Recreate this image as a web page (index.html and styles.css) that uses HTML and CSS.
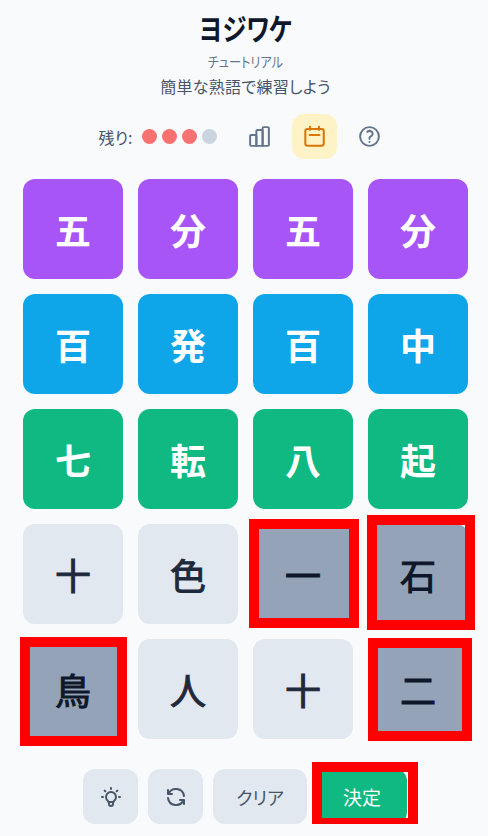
FILE: index.html
```html
<!DOCTYPE html>
<html lang="ja">
<head>
    <meta charset="UTF-8">
    <meta name="viewport" content="width=device-width, initial-scale=1.0">
    <title>ヨジワケ</title>
    <link rel="stylesheet" href="styles.css">
</head>
<body>

    <div class="game">
        <h1 class="title">ヨジワケ</h1>
        <div class="subtitle">チュートリアル</div>
        <div class="description">簡単な熟語で練習しよう</div>

        <div class="status">
            <div class="lives">
                <span class="lives-label">残り:</span>
                <span class="dot"></span>
                <span class="dot"></span>
                <span class="dot"></span>
                <span class="dot used"></span>
            </div>
            <div class="icon-buttons">
                <div class="icon-button">
                    <svg viewBox="0 0 24 24" width="25" height="25" fill="none" stroke="currentColor" stroke-width="1.9" stroke-linejoin="round">
                        <path d="M4 10.6h4a1 1 0 0 1 1 1V21H4a1 1 0 0 1-1-1v-8.4a1 1 0 0 1 1-1z"/>
                        <path d="M10 5.8h4a1 1 0 0 1 1 1V21H9V6.8a1 1 0 0 1 1-1z"/>
                        <path d="M16 3h4a1 1 0 0 1 1 1v16a1 1 0 0 1-1 1h-5V4a1 1 0 0 1 1-1z"/>
                    </svg>
                </div>
                <div class="icon-button active">
                    <svg viewBox="0 0 24 24" width="25" height="25" fill="none" stroke="currentColor" stroke-width="2" stroke-linecap="round" stroke-linejoin="round">
                        <rect x="3.2" y="4.8" width="17.7" height="16" rx="2"/>
                        <path d="M7.7 2.6v3M16.3 2.6v3M7.4 10.5h9.4"/>
                    </svg>
                </div>
                <div class="icon-button">
                    <svg viewBox="0 0 24 24" width="25" height="25" fill="none" stroke="currentColor" stroke-width="1.9" stroke-linecap="round" stroke-linejoin="round">
                        <path d="M3 12a9 9 0 1 0 18 0a9 9 0 0 0-18 0"/>
                        <path d="M9.879 7.519c1.171-1.025 3.071-1.025 4.242 0 1.172 1.025 1.172 2.687 0 3.712-.203.179-.43.326-.67.442-.745.361-1.45.999-1.45 1.827v.75"/>
                        <path d="M12 17.25v.01"/>
                    </svg>
                </div>
            </div>
        </div>

        <div class="board">
            <div class="tile purple">五</div>
            <div class="tile purple">分</div>
            <div class="tile purple">五</div>
            <div class="tile purple">分</div>
            <div class="tile blue">百</div>
            <div class="tile blue">発</div>
            <div class="tile blue">百</div>
            <div class="tile blue">中</div>
            <div class="tile green">七</div>
            <div class="tile green">転</div>
            <div class="tile green">八</div>
            <div class="tile green">起</div>
            <div class="tile">十</div>
            <div class="tile">色</div>
            <div class="tile selected">一<span class="mark mark-ichi"></span></div>
            <div class="tile selected">石<span class="mark mark-ishi"></span></div>
            <div class="tile selected">鳥<span class="mark mark-tori"></span></div>
            <div class="tile">人</div>
            <div class="tile">十</div>
            <div class="tile selected">二<span class="mark mark-ni"></span></div>
        </div>

        <div class="actions">
            <div class="action square">
                <svg viewBox="0 0 24 24" width="24" height="24" fill="none" stroke="currentColor" stroke-width="2" stroke-linecap="round" stroke-linejoin="round">
                    <path d="M3 12h1m8-9v1m8 8h1m-15.4-6.4l.7 .7m12.1-.7l-.7 .7"/>
                    <path d="M9 16a5 5 0 1 1 6 0a3.5 3.5 0 0 0-1 3a2 2 0 0 1-4 0a3.5 3.5 0 0 0-1-3"/>
                    <path d="M9.7 17l4.6 0"/>
                </svg>
            </div>
            <div class="action square">
                <svg viewBox="0 0 24 24" width="24" height="24" fill="none" stroke="currentColor" stroke-width="2" stroke-linecap="round" stroke-linejoin="round">
                    <path d="M20 11a8.1 8.1 0 0 0-15.5-2m-.5-4v4h4"/>
                    <path d="M4 13a8.1 8.1 0 0 0 15.5 2m.5 4v-4h-4"/>
                </svg>
            </div>
            <div class="action clear">クリア</div>
            <div class="action submit">決定<span class="mark mark-submit"></span></div>
        </div>
    </div>

</body>
</html>
```

FILE: styles.css
```css
body {
    margin: 0;
    background-color: #f8fafc;
    color: #0f172a;
    font-family: "Noto Sans CJK JP", "Noto Sans", sans-serif;
    font-feature-settings: "palt";
}

.game {
    width: 445px;
    margin-left: 23px;
    padding-top: 9px;
    display: flex;
    flex-direction: column;
    align-items: center;
}

/* the kana in the original font are narrow */
.title {
    margin: 0;
    font-size: 30px;
    line-height: 36px;
    font-weight: 700;
    transform: scaleX(0.81);
}

.subtitle {
    margin-top: 8px;
    font-size: 14px;
    line-height: 16px;
    color: #64748b;
    transform: scaleX(0.87);
}

.description {
    margin-top: 5px;
    font-size: 16px;
    line-height: 24px;
    letter-spacing: 0.3px;
    color: #475569;
}

.status {
    margin-top: 16px;
    display: flex;
    align-items: center;
    gap: 20px;
}

.lives {
    display: flex;
    align-items: center;
    gap: 5px;
}

.lives-label {
    margin-right: 5px;
    font-size: 16px;
    color: #475569;
}

.dot {
    width: 15px;
    height: 15px;
    border-radius: 50%;
    background-color: #f87171;
}

.dot.used {
    background-color: #cbd5e1;
}

.icon-buttons {
    display: flex;
    gap: 10px;
}

.icon-button {
    width: 45px;
    height: 45px;
    border-radius: 12px;
    display: flex;
    justify-content: center;
    align-items: center;
    color: #64748b;
}

.icon-button.active {
    background-color: #fef3c7;
    color: #d97706;
}

.board {
    margin-top: 20px;
    display: grid;
    grid-template-columns: repeat(4, 100px);
    grid-auto-rows: 100px;
    gap: 15px;
}

.tile {
    position: relative;
    border-radius: 12px;
    background-color: #e2e8f0;
    color: #1e293b;
    font-size: 36px;
    font-weight: 400;
    -webkit-text-stroke: 1px currentColor;
    display: flex;
    justify-content: center;
    align-items: center;
}

.tile.purple,
.tile.blue,
.tile.green {
    color: #fff;
    font-weight: 700;
    -webkit-text-stroke: 0;
}

.tile.purple {
    background-color: #a855f7;
}

.tile.blue {
    background-color: #0ea5e9;
}

.tile.green {
    background-color: #10b981;
}

.tile.selected {
    background-color: #94a3b8;
    color: #0f172a;
}

.actions {
    margin-top: 30px;
    align-self: flex-start;
    margin-left: 60px;
    display: flex;
    gap: 10px;
}

.action {
    position: relative;
    height: 55px;
    border-radius: 12px;
    background-color: #e2e8f0;
    color: #475569;
    font-size: 18px;
    display: flex;
    justify-content: center;
    align-items: center;
}

.action.square {
    width: 55px;
}

.action.clear {
    width: 94px;
}

.action.submit {
    width: 90px;
    background-color: #10b981;
    color: #fff;
    font-size: 19px;
}

/* red boxes drawn over the picked pieces */
.mark {
    position: absolute;
    box-sizing: border-box;
    border: 10px solid #f00;
}

.mark-ichi {
    left: -4px;
    top: -5px;
    width: 110px;
    height: 109px;
}

.mark-ishi {
    left: -1px;
    top: -9px;
    width: 108px;
    height: 115px;
}

.mark-tori {
    left: -3px;
    top: -2px;
    width: 107px;
    height: 109px;
}

.mark-ni {
    left: 0;
    top: -1px;
    width: 104px;
    height: 103px;
}

.mark-submit {
    left: -5px;
    top: -7px;
    width: 106px;
    height: 66px;
}
```
